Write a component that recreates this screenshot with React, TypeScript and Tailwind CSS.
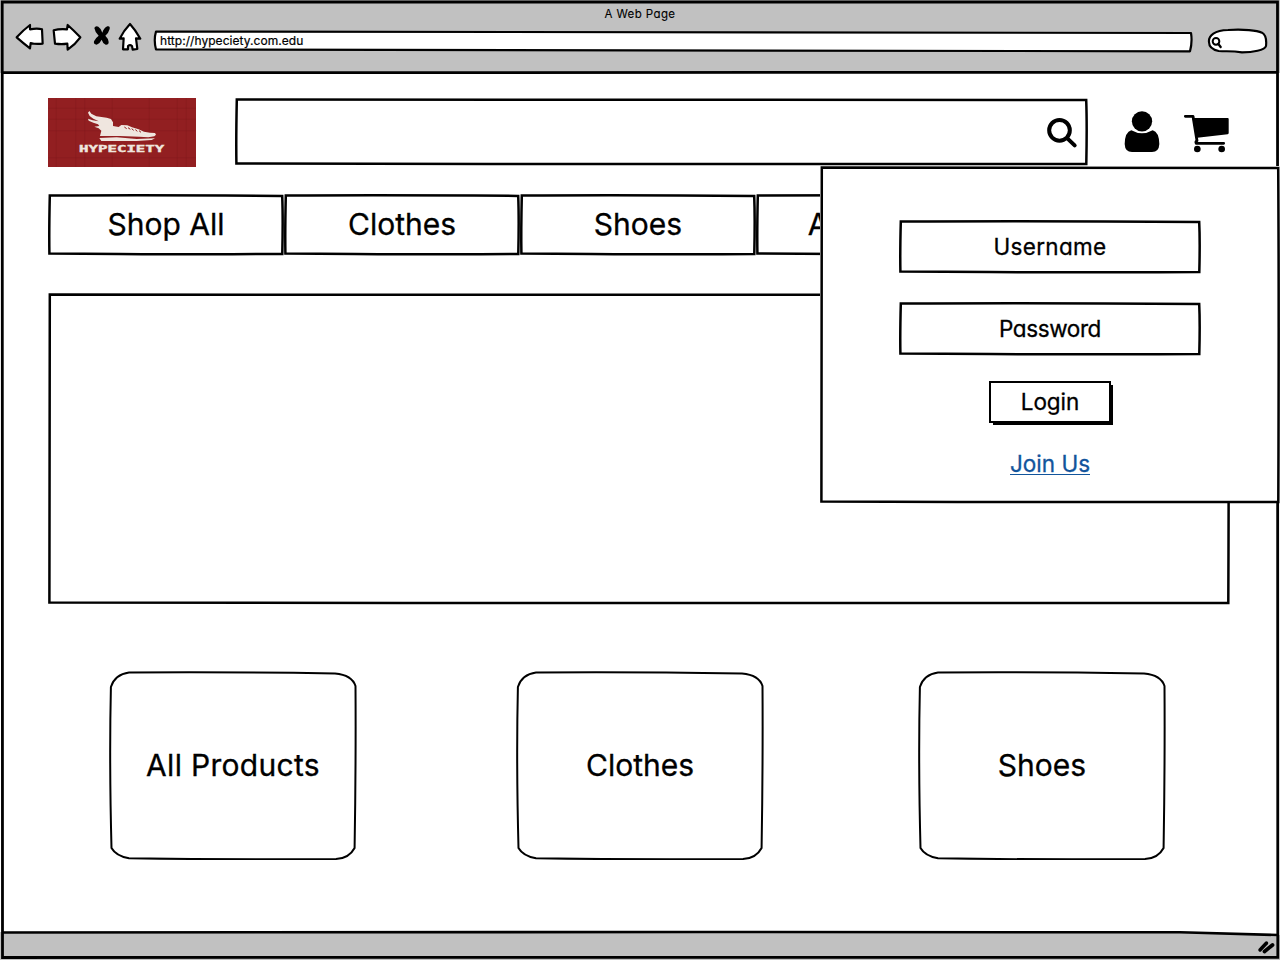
import type { ReactNode } from 'react';

type OutlineProps = { w: number; h: number; stroke?: number };

/* Hand-drawn rectangle outline, laid over its parent box. */
function Outline({ w, h, stroke = 2.5 }: OutlineProps) {
  const d = [
    `M1.8 1.6 Q${w * 0.45} 1 ${w - 1.8} 1.9`,
    `Q${w - 0.9} ${h * 0.4} ${w - 1.7} ${h - 1.1}`,
    `Q${w * 0.5} ${h - 0.3} ${w * 0.3} ${h - 0.9}`,
    `L1.4 ${h - 1.5} Q1 ${h * 0.6} 1.8 1.6 Z`,
  ].join(' ');
  return (
    <svg className="pointer-events-none absolute inset-0 overflow-visible" width={w} height={h} aria-hidden="true">
      <path d={d} fill="none" stroke="#000" strokeWidth={stroke} strokeLinejoin="miter" />
    </svg>
  );
}

function BackIcon() {
  return (
    <svg width="30" height="30" viewBox="45 66 90 90">
      <path d="M50 112 Q70 90 90 75 L90 88 Q112 84 126 88 L128 131 Q105 133 92 129 L90 145 Q68 128 50 112Z" fill="#fff" stroke="#000" strokeWidth="6.5" strokeLinejoin="round" />
    </svg>
  );
}

function ForwardIcon() {
  return (
    <svg width="32" height="30" viewBox="153 66 96 90">
      <path d="M241 112 Q220 90 203 75 L201 88 Q178 86 161 91 L165 131 Q185 134 202 131 L203 149 Q226 133 241 112Z" fill="#fff" stroke="#000" strokeWidth="6.5" strokeLinejoin="round" />
    </svg>
  );
}

function StopIcon() {
  return (
    <svg width="20" height="30" viewBox="276 66 60 90">
      <path d="M283 84 Q286 77 295 80 Q304 86 307 98 Q311 84 322 79 Q331 77 329 87 Q326 99 316 107 Q324 114 326 126 Q326 135 317 134 Q308 130 305 119 Q300 130 290 134 Q280 134 282 124 Q286 114 296 107 Q285 97 283 84Z" fill="#000" />
    </svg>
  );
}

function HomeIcon() {
  return (
    <svg width="26" height="30" viewBox="351 66 78 90">
      <path d="M390 72 Q407 91 421 116 L408 115 L412 147 L398 149 L396 138 Q390 133 384 138 L384 148 L369 148 L371 115 L359 116 Q371 92 390 72Z" fill="#fff" stroke="#000" strokeWidth="6.5" strokeLinejoin="round" />
    </svg>
  );
}

function SearchPill() {
  return (
    <svg width="62" height="26" viewBox="741 84 186 78">
      <path d="M747 126 C745 106 765 91 804 90 C850 86 892 92 906 98 C918 105 920 120 918 138 C914 151 878 157 846 157 C814 152 798 155 776 153 C757 149 747 140 747 126Z" fill="#fff" stroke="#000" strokeWidth="6.5" />
      <circle cx="768" cy="124" r="10" fill="none" stroke="#000" strokeWidth="6" />
      <path d="M775 132 L782 141" stroke="#000" strokeWidth="7" strokeLinecap="round" />
    </svg>
  );
}

function SearchIcon() {
  return (
    <svg width="32" height="32" viewBox="258 354 96 96">
      <circle cx="298.5" cy="394" r="31" fill="none" stroke="#000" strokeWidth="12" />
      <path d="M322 418 L344 439" stroke="#000" strokeWidth="12" strokeLinecap="round" />
    </svg>
  );
}

function UserIcon() {
  return (
    <svg width="36" height="42" viewBox="492 330 108 126">
      <circle cx="546" cy="364" r="30.5" />
      <path d="M514 391 Q546 409 578 391 Q597 396 598 432 Q597 456 576 456 L516 456 Q495 456 494 432 Q495 396 514 391Z" />
    </svg>
  );
}

function CartIcon() {
  return (
    <svg width="46" height="42" viewBox="669 333 138 126">
      <path d="M676 349 H699 L711 422 Q706 426 709 430 H791" fill="none" stroke="#000" strokeWidth="8.5" strokeLinecap="round" strokeLinejoin="round" />
      <path d="M697 354 H803 Q806 354 806 357 V399 Q806 402 803 403 L712 413Z" />
      <circle cx="712" cy="447" r="10" />
      <circle cx="785" cy="447" r="10" />
    </svg>
  );
}

function Logo() {
  return (
    <svg width="148" height="69" viewBox="24 24 444 207" className="shrink-0">
      <rect x="24" y="24" width="444" height="207" fill="#921f21" />
      <g stroke="#7f1a1d" strokeWidth="2">
        <path d="M49 24V231M107 24V231M134 24V231M217 24V231M328 24V231M412 24V231M439 24V231" opacity=".5" />
        <path d="M24 55H468M24 88H468M24 122H468M24 203H468" opacity=".5" />
      </g>
      <path
        d="M148 63 L154 71 L169 79 L200 83 L213 87 L219 97 L219 108 L236 111 L244 105 L262 106 L276 112 L296 118 L312 125 L330 128 L345 129 L348 134 L343 139 L325 142 L298 140 L240 138 L180 138 L184 122 L176 115 L163 110 L178 108 L174 103 L160 98 L146 92 L144 86 L158 91 L176 94 L160 86 L149 78 L144 68Z"
        fill="#efe6df"
      />
      <path d="M178 144 L230 142 L290 147 L345 145 L335 150 L290 153 L184 153Z" fill="#efe6df" />
      <path d="M253 111L260 116M264 113L271 118M275 116L281 121M286 119L292 124M297 122L303 127" stroke="#921f21" strokeWidth="3" />
      <text
        x="117"
        y="186"
        textLength="256"
        lengthAdjust="spacingAndGlyphs"
        className="fill-[#efe6df] stroke-[#efe6df] stroke-1 text-[24px] font-bold [font-family:'DejaVu_Sans_Mono',monospace]"
      >
        HYPECIETY
      </text>
    </svg>
  );
}

function NavItem({ children, wide = false }: { children: ReactNode; wide?: boolean }) {
  return (
    <div className={`relative flex h-[61px] shrink-0 items-center justify-center text-[30px] ${wide ? 'w-[278px]' : 'w-[236px]'}`}>
      <Outline w={wide ? 278 : 236} h={61} />
      {children}
    </div>
  );
}

function Field({ children }: { children: ReactNode }) {
  return (
    <div className="relative flex h-[53px] w-[302px] items-center justify-center text-[22.5px]">
      <Outline w={302} h={53} />
      {children}
    </div>
  );
}

function Card({ children }: { children: ReactNode }) {
  return (
    <div className="relative flex h-[189px] w-[248px] items-center justify-center text-[30px]">
      <svg className="absolute inset-0" width="248" height="189" viewBox="0 0 248 189" aria-hidden="true">
        <path
          d="M20 1.600 Q110 0.800 226 2.500 Q243 4 246.500 15 Q247 90 245.600 177 Q240 187.500 227 188 Q120 188.800 20 187.300 Q7 185 2.500 177 Q0.200 90 1.900 16 Q6 3.500 20 1.600Z"
          fill="none"
          stroke="#000"
          strokeWidth="2"
        />
      </svg>
      {children}
    </div>
  );
}

export default function App() {
  return (
    <div className="relative flex h-[960px] w-[1280px] flex-col overflow-hidden bg-white text-black [-webkit-text-stroke:0.3px] [font-family:Inter,'Open_Sans',sans-serif] [font-feature-settings:'cv11']">
      <header className="h-[73px] shrink-0 bg-[#c1c1c1]">
        <div className="flex h-[22px] items-center justify-center pt-[7px] text-[11.5px] tracking-[0.4px] [-webkit-text-stroke:0.1px]">A Web Page</div>
        <div className="flex items-start pl-[15px]">
          <BackIcon />
          <div className="w-[6px]" />
          <ForwardIcon />
          <div className="w-[9px]" />
          <StopIcon />
          <div className="w-[5px]" />
          <HomeIcon />
          <div className="relative mt-[8px] ml-[10px] flex h-[23px] w-[1041px] items-center pb-[2px] pl-[7px] text-[12px] tracking-[0.05px] [-webkit-text-stroke:0.2px]">
            <svg className="absolute inset-0" width="1041" height="23" aria-hidden="true">
              <path d="M3 1.500 Q500 1 1038 3 Q1039.500 12 1037 21.300 Q500 21 3 19.500 Q0.500 10 3 1.500Z" fill="#fff" stroke="#000" strokeWidth="2.200" strokeLinejoin="round" />
            </svg>
            <span className="relative">http://hypeciety.com.edu</span>
          </div>
          <div className="mt-[6px] ml-[13px]">
            <SearchPill />
          </div>
        </div>
      </header>

      <main className="flex flex-1 flex-col pl-[48px]">
        <div className="mt-[25px] flex items-start">
          <Logo />
          <div className="relative ml-[39px] flex h-[67px] w-[853px] items-center justify-end pt-[2px] pr-[10px]">
            <Outline w={853} h={67} />
            <SearchIcon />
          </div>
          <div className="mt-[12px] ml-[36px]">
            <UserIcon />
          </div>
          <div className="mt-[13px] ml-[23px]">
            <CartIcon />
          </div>
        </div>

        <nav className="mt-[27px] flex">
          <NavItem>Shop All</NavItem>
          <NavItem>Clothes</NavItem>
          <NavItem>Shoes</NavItem>
          <NavItem wide>Accessories</NavItem>
        </nav>

        <section className="relative mt-[38px] h-[311px] w-[1182px] shrink-0">
          <Outline w={1182} h={311} />
        </section>

        <section className="mt-[67px] flex pl-[61px]">
          <Card>
            <span className="tracking-[0.3px]">All Products</span>
          </Card>
          <div className="w-[159px]" />
          <Card>Clothes</Card>
          <div className="w-[154px]" />
          <Card>Shoes</Card>
        </section>
      </main>

      <footer className="flex h-[28px] shrink-0 items-start justify-end bg-[#c1c1c1] pt-[7px] pr-[4px]">
        <svg width="20" height="16" viewBox="0 0 20 16">
          <path d="M4 11 L10.500 4" stroke="#000" strokeWidth="3.500" strokeLinecap="round" />
          <path d="M8.500 12.500 L16.500 6" stroke="#000" strokeWidth="3.800" strokeLinecap="round" />
        </svg>
      </footer>

      <svg className="pointer-events-none absolute inset-0" width="1280" height="960" aria-hidden="true">
        <path d="M1180 931 L1280 931 L1280 935 Z" fill="#fff" />
        <path d="M2.200 2 L1277.500 2 Q1278.500 500 1277.800 957.300 Q600 958.300 2.500 957.500 Q1.300 400 2.200 2Z" fill="none" stroke="#000" strokeWidth="2.800" />
        <path d="M2 72.700 L1278 72.300" stroke="#000" strokeWidth="2.800" />
        <path d="M2 932.500 Q300 931.500 700 932 L1180 932.300 L1278 935" fill="none" stroke="#000" strokeWidth="2.600" />
      </svg>

      <aside className="absolute top-[166px] left-[820px] flex h-[337px] w-[460px] flex-col items-center bg-white pt-[54px]">
        <Outline w={460} h={337} />
        <Field>
          <span className="tracking-[0.3px]">Username</span>
        </Field>
        <div className="h-[29px]" />
        <Field>
          <span className="tracking-[-0.4px]">Password</span>
        </Field>
        <button className="mt-[26px] flex h-[42px] w-[122px] items-center justify-center border-2 border-black bg-white text-[22.5px] tracking-[-0.1px] shadow-[3px_3px_0_-1px_#000]">
          Login
        </button>
        <a className="mt-[28px] border-b border-[#12559c] text-[22.5px] leading-[23px] text-[#12559c]">
          <span className="relative top-px">Join Us</span>
        </a>
      </aside>
    </div>
  );
}
